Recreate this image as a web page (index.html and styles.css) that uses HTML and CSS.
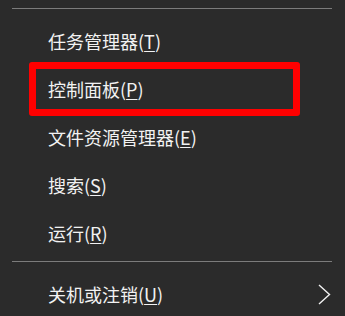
FILE: index.html
```html
<!DOCTYPE html>
<html lang="zh-CN">
<head>
<meta charset="utf-8">
<link rel="stylesheet" href="styles.css">
</head>
<body>
<div class="menu">
  <div class="sep sep-top"></div>
  <div class="group">
    <div class="item"><span>任务管理器(<u>T</u>)</span></div>
    <div class="item item-marked"><span>控制面板(<u>P</u>)</span></div>
    <div class="item"><span>文件资源管理器(<u>E</u>)</span></div>
    <div class="item"><span>搜索(<u>S</u>)</span></div>
    <div class="item"><span>运行(<u>R</u>)</span></div>
  </div>
  <div class="sep sep-bottom"></div>
  <div class="item item-sub">
    <span>关机或注销(<u>U</u>)</span>
    <svg class="chev" width="13" height="21" viewBox="0 0 13 21"><polyline points="1,1 11.5,10.5 1,20" fill="none" stroke="#f2f2f2" stroke-width="1.4"/></svg>
  </div>
</div>
</body>
</html>
```
FILE: styles.css
```css
html, body {
  margin: 0;
  padding: 0;
  background: #2b2b2b;
}
body {
  width: 345px;
  height: 316px;
  overflow: hidden;
  font-family: "Noto Sans CJK SC", "Noto Sans", sans-serif;
  color: #f2f2f2;
}
.menu {
  display: flex;
  flex-direction: column;
  padding-top: 8px;
}
.sep {
  height: 1px;
  background: #7c7c7c;
  margin: 0 13px 0 12px;
}
.group {
  display: flex;
  flex-direction: column;
  padding-top: 8px;
  padding-bottom: 4px;
}
.item {
  position: relative;
  height: 48px;
  display: flex;
  align-items: center;
  padding-left: 48px;
  padding-right: 14px;
  font-size: 18px;
  line-height: 1;
}
.item u {
  text-decoration: underline;
  text-decoration-thickness: 1px;
  text-underline-offset: 2px;
}
.item-marked::after {
  content: "";
  position: absolute;
  left: 29px;
  right: 45px;
  top: -3px;
  bottom: -3px;
  border: 7px solid #ff0000;
  border-radius: 3px;
}
.sep-bottom {
  margin-bottom: 8px;
}
.item-sub {
  justify-content: space-between;
}
.chev {
  display: block;
}
```
